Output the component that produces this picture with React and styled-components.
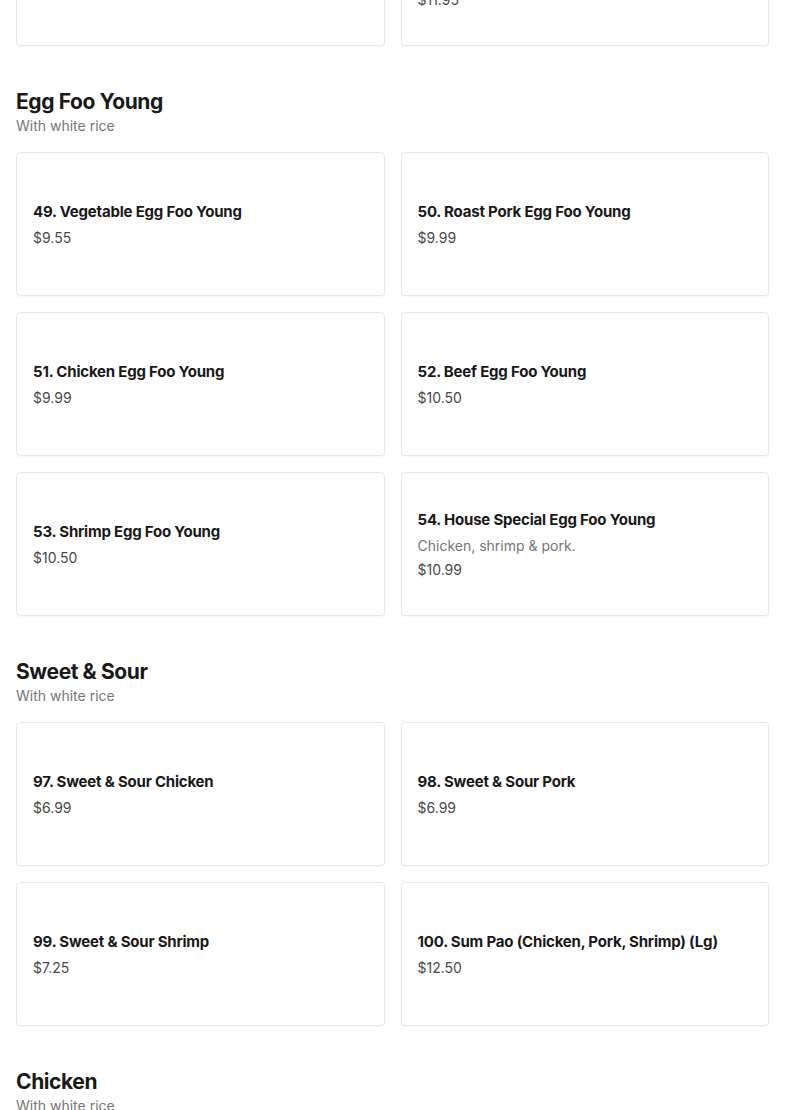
import React from "react";
import styled, { createGlobalStyle } from "styled-components";

const GlobalStyle = createGlobalStyle`
  html, body {
    margin: 0;
    padding: 0;
    background: #ffffff;
    overflow: hidden;
  }
  body {
    font-family: Inter, "Liberation Sans", sans-serif;
    color: #191919;
  }
`;

const menu = [
  {
    id: "prev",
    items: [
      { name: "47. House Special Chow Mein", price: "$11.55" },
      {
        name: "48. House Special Lo Mein",
        desc: "Chicken, shrimp & pork.",
        price: "$11.95",
      },
    ],
  },
  {
    id: "egg",
    title: "Egg Foo Young",
    subtitle: "With white rice",
    items: [
      { name: "49. Vegetable Egg Foo Young", price: "$9.55" },
      { name: "50. Roast Pork Egg Foo Young", price: "$9.99" },
      { name: "51. Chicken Egg Foo Young", price: "$9.99" },
      { name: "52. Beef Egg Foo Young", price: "$10.50" },
      { name: "53. Shrimp Egg Foo Young", price: "$10.50" },
      {
        name: "54. House Special Egg Foo Young",
        desc: "Chicken, shrimp & pork.",
        price: "$10.99",
      },
    ],
  },
  {
    id: "sweet",
    title: "Sweet & Sour",
    subtitle: "With white rice",
    items: [
      { name: "97. Sweet & Sour Chicken", price: "$6.99" },
      { name: "98. Sweet & Sour Pork", price: "$6.99" },
      { name: "99. Sweet & Sour Shrimp", price: "$7.25" },
      { name: "100. Sum Pao (Chicken, Pork, Shrimp) (Lg)", price: "$12.50" },
    ],
  },
  {
    id: "chicken",
    title: "Chicken",
    subtitle: "With white rice",
    items: [
      { name: "55. Chicken with Broccoli", price: "$9.99" },
      { name: "56. Chicken with Mixed Vegetables", price: "$9.99" },
    ],
  },
];

export default function App() {
  return (
    <>
      <GlobalStyle />
      <Page>
        {menu.map((section) => (
          <Section key={section.id} $first={!section.title}>
            {section.title && (
              <Header>
                <h2>{section.title}</h2>
                <p>{section.subtitle}</p>
              </Header>
            )}
            <Grid>
              {section.items.map((item) => (
                <Card key={item.name}>
                  <Name>{item.name}</Name>
                  {item.desc && <Desc>{item.desc}</Desc>}
                  <Price>{item.price}</Price>
                </Card>
              ))}
            </Grid>
          </Section>
        ))}
      </Page>
    </>
  );
}

// page is shown scrolled: the previous section's last row peeks in at the top
const Page = styled.main`
  margin-top: -98px;
  padding: 0 16px;
  display: flex;
  flex-direction: column;
`;

const Section = styled.section`
  padding-top: ${(p) => (p.$first ? "0" : "41px")};
`;

const Header = styled.header`
  margin-bottom: 16px;

  h2 {
    margin: 0;
    font-size: 21px;
    line-height: 29px;
    font-weight: 700;
    letter-spacing: -0.4px;
    color: #191919;
  }

  p {
    margin: 0;
    font-size: 14px;
    line-height: 20px;
    color: #767676;
  }
`;

const Grid = styled.div`
  display: grid;
  grid-template-columns: 1fr 1fr;
  gap: 16px;
`;

const Card = styled.article`
  box-sizing: border-box;
  height: 144px;
  padding: 2px 16px 0;
  display: flex;
  flex-direction: column;
  justify-content: center;
  border: 1px solid #e8e8e8;
  border-radius: 4px;
  box-shadow: 0 1px 2px rgba(0, 0, 0, 0.04);
  background: #ffffff;
`;

const Name = styled.h3`
  margin: 0 0 6px;
  font-size: 15px;
  line-height: 20px;
  font-weight: 700;
  letter-spacing: -0.2px;
  color: #191919;
`;

const Desc = styled.p`
  margin: 0 0 4px;
  font-size: 14px;
  line-height: 20px;
  color: #767676;
`;

const Price = styled.span`
  font-size: 14px;
  line-height: 20px;
  color: #494949;
`;
